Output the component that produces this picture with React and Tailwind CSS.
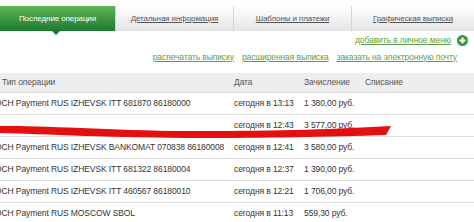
import React from "react";

const rows = [
  { name: "OCH Payment RUS IZHEVSK ITT 681870 86180000", date: "сегодня в 13:13", sum: "1 380,00 руб." },
  { name: "", date: "сегодня в 12:43", sum: "3 577,00 руб." },
  { name: "OCH Payment RUS IZHEVSK BANKOMAT 070838 86180008", date: "сегодня в 12:41", sum: "3 580,00 руб." },
  { name: "OCH Payment RUS IZHEVSK ITT 681322 86180004", date: "сегодня в 12:37", sum: "1 390,00 руб." },
  { name: "OCH Payment RUS IZHEVSK ITT 460567 86180010", date: "сегодня в 12:21", sum: "1 706,00 руб." },
  { name: "OCH Payment RUS MOSCOW SBOL", date: "сегодня в 11:13", sum: "559,30 руб." },
];

const tabs = [
  { label: "Детальная информация", w: "w-[118px]" },
  { label: "Шаблоны и платежи", w: "w-[118px]" },
  { label: "Графическая выписка", w: "flex-1" },
];

export default function App() {
  return (
    <div className="relative w-[474px] h-[222px] overflow-hidden bg-white text-[8.5px] tracking-[-0.1px] text-[#333]" style={{ fontFamily: '"Liberation Sans", Arial, sans-serif' }}>
      {/* tabs */}
      <div className="flex h-[25px] mt-[6px] text-[8px]">
        <div className="relative w-[115px] flex items-center justify-center bg-gradient-to-b from-[#5cb656] to-[#1c7a32] text-white">
          Последние операции
          <div className="absolute left-[52px] top-[25px] w-0 h-0 border-l-[4px] border-r-[4px] border-t-[4px] border-l-transparent border-r-transparent border-t-[#1c7a32]" />
        </div>
        {tabs.map((t) => (
          <div key={t.label} className={`${t.w} flex items-center justify-center border-l border-[#d4d4d4] bg-gradient-to-b from-white to-[#e4e4e4]`}>
            <span className="underline text-[#555]">{t.label}</span>
          </div>
        ))}
      </div>

      {/* add to menu */}
      <div className="flex justify-end items-center gap-[6px] pr-[6px] h-[16px] mt-[1px]">
        <span className="underline text-[#5a9f43]">добавить в личное меню</span>
        <svg width="11" height="11" viewBox="0 0 11 11">
          <circle cx="5.5" cy="5.5" r="5.5" fill="#2f9a3a" />
          <path d="M5.5 2.5v6M2.5 5.5h6" stroke="#fff" strokeWidth="2" />
        </svg>
      </div>

      {/* links */}
      <div className="flex justify-end gap-[8px] pr-[17px] h-[16px] mt-[1px] items-center text-[#5a9f43]">
        <span className="underline">распечатать выписку</span>
        <span className="underline">расширенная выписка</span>
        <span className="underline">заказать на электронную почту</span>
      </div>

      {/* table */}
      <div className="mt-[8px]">
        <div className="flex h-[19px] items-center bg-[#eeeeee] text-[#555]">
          <div className="w-[234px] pl-[2px]">Тип операции</div>
          <div className="w-[70px]">Дата</div>
          <div className="w-[61px]">Зачисление</div>
          <div>Списание</div>
        </div>
        {rows.map((r, i) => (
          <div key={i} className="flex h-[22px] items-center border-t border-[#dcdcdc]">
            <div className="w-[234px] overflow-hidden whitespace-nowrap">
              <span className="ml-[-5px] block">{r.name}</span>
            </div>
            <div className="w-[70px] whitespace-nowrap">{r.date}</div>
            <div className="w-[61px] whitespace-nowrap">{r.sum}</div>
          </div>
        ))}
      </div>

      {/* red marker scribble */}
      <svg className="absolute left-0 top-[120px]" width="400" height="22" viewBox="0 0 400 22">
        <path d="M0 6 C40 5 120 11 200 11 C280 11 340 9 391 6 L386 15 C330 17 260 18 200 18 C120 18 40 14 0 13 Z" fill="#e40f0f" />
      </svg>
    </div>
  );
}
